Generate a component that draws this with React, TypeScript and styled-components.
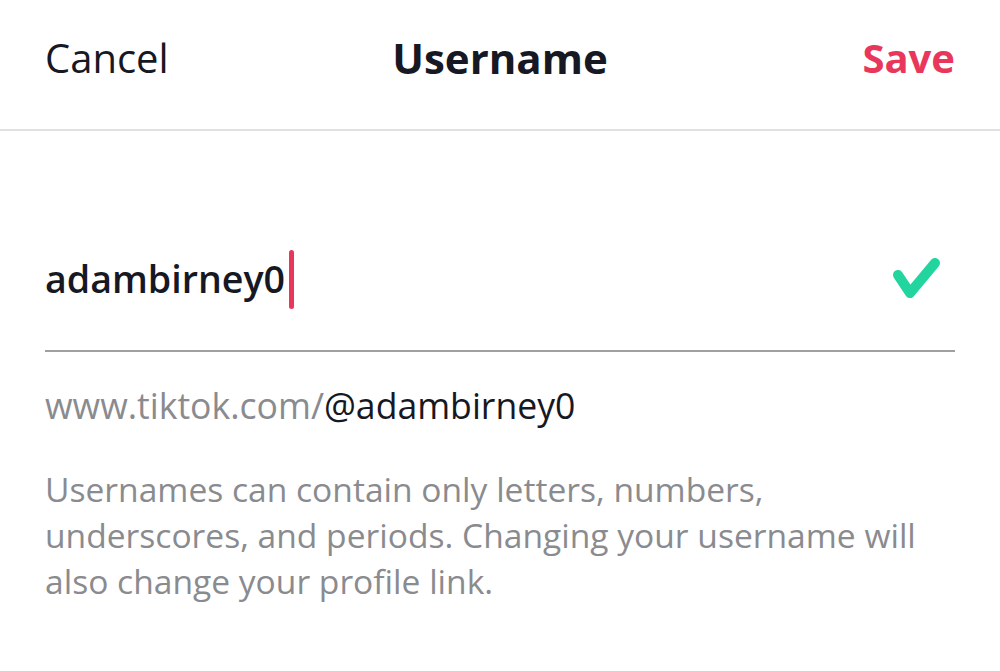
import React from "react";
import styled, { createGlobalStyle } from "styled-components";

const Global = createGlobalStyle`
  html, body { margin: 0; padding: 0; background: #ffffff; }
  body { font-family: "Open Sans", "Noto Sans", "Liberation Sans", sans-serif; }
`;

const Page = styled.div`
  width: 1000px;
  height: 671px;
  background: #fff;
  overflow: hidden;
`;

const Header = styled.header`
  height: 129px;
  border-bottom: 2px solid #e1e1e3;
  display: grid;
  grid-template-columns: 1fr auto 1fr;
  align-items: center;
  padding: 0 45px;
`;

const HeaderButton = styled.span<{ $tone: "plain" | "accent" }>`
  font-size: 40px;
  line-height: 40px;
  font-weight: ${(p) => (p.$tone === "accent" ? 700 : 400)};
  color: ${(p) => (p.$tone === "accent" ? "#e9375b" : "#161823")};
  justify-self: ${(p) => (p.$tone === "accent" ? "end" : "start")};
  padding-bottom: 14px;
`;

const Title = styled.h1`
  margin: 0;
  font-size: 42px;
  line-height: 40px;
  font-weight: 700;
  color: #161823;
  padding-bottom: 14px;
`;

const Body = styled.main`
  padding: 0 45px;
`;

const InputRow = styled.div`
  margin-top: 118px;
  height: 103px;
  border-bottom: 2px solid #a0a0a3;
  display: flex;
  align-items: flex-start;
  justify-content: space-between;
  box-sizing: border-box;
`;

const Value = styled.div`
  display: flex;
  align-items: center;
  font-size: 37.6px;
  font-weight: 600;
  color: #161823;
  line-height: 60px;
`;

const Caret = styled.span`
  display: inline-block;
  width: 5px;
  height: 59px;
  border-radius: 3px;
  background: #e9375b;
  margin-left: 4px;
`;

const Check = styled.svg`
  width: 56px;
  height: 50px;
  margin-top: 3px;
  margin-right: 11px;
`;

const Url = styled.p`
  margin: 33px 0 0;
  font-size: 35.6px;
  line-height: 40px;
  color: #8a8b8f;
`;

const Handle = styled.span`
  color: #161823;
`;

const Hint = styled.p`
  margin: 41px 0 0;
  font-size: 33.6px;
  line-height: 46px;
  color: #8a8b8f;
  width: 910px;
`;

export default function App() {
  return (
    <Page>
      <Global />
      <Header>
        <HeaderButton $tone="plain">Cancel</HeaderButton>
        <Title>Username</Title>
        <HeaderButton $tone="accent">Save</HeaderButton>
      </Header>
      <Body>
        <InputRow>
          <Value>
            adambirney0
            <Caret />
          </Value>
          <Check viewBox="0 0 56 50" aria-hidden="true">
            <path
              d="M10 23 L22 41 L47 11"
              fill="none"
              stroke="#22d49d"
              strokeWidth="10"
              strokeLinecap="round"
              strokeLinejoin="round"
            />
          </Check>
        </InputRow>
        <Url>
          www.tiktok.com/<Handle>@adambirney0</Handle>
        </Url>
        <Hint>
          Usernames can contain only letters, numbers, underscores, and
          periods. Changing your username will also change your profile link.
        </Hint>
      </Body>
    </Page>
  );
}
